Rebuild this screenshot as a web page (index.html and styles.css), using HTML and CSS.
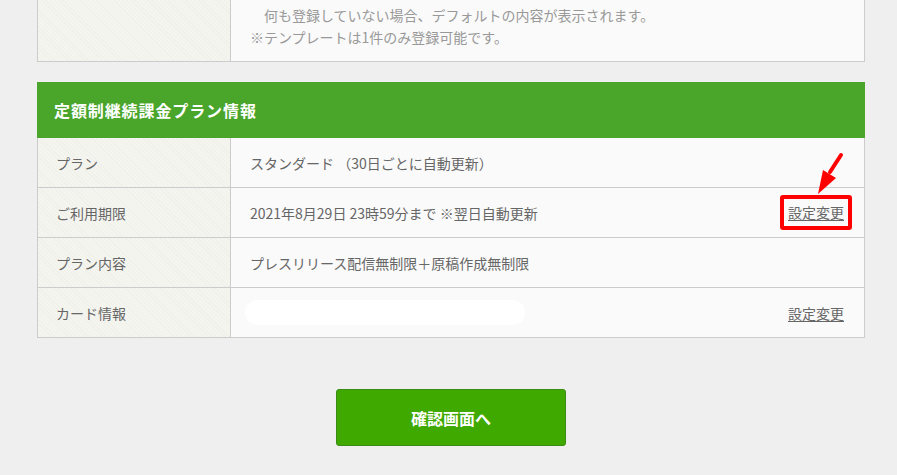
FILE: index.html
```html
<!DOCTYPE html>
<html lang="ja">
<head>
<meta charset="utf-8">
<title>定額制継続課金プラン情報</title>
<link rel="stylesheet" href="styles.css">
</head>
<body>
<div class="page">
  <div class="table top-table">
    <div class="row">
      <div class="label"></div>
      <div class="value notes">
        <p class="note indent">何も登録していない場合、デフォルトの内容が表示されます。</p>
        <p class="note">※テンプレートは1件のみ登録可能です。</p>
      </div>
    </div>
  </div>

  <section class="card">
    <h2 class="card-title">定額制継続課金プラン情報</h2>
    <div class="table">
      <div class="row">
        <div class="label">プラン</div>
        <div class="value">スタンダード （30日ごとに自動更新）</div>
      </div>
      <div class="row">
        <div class="label">ご利用期限</div>
        <div class="value">
          <span>2021年8月29日 23時59分まで ※翌日自動更新</span>
          <span class="highlight"><a class="link" href="#">設定変更</a></span>
        </div>
      </div>
      <div class="row">
        <div class="label">プラン内容</div>
        <div class="value">プレスリリース配信無制限＋原稿作成無制限</div>
      </div>
      <div class="row">
        <div class="label">カード情報</div>
        <div class="value">
          <span class="pill"></span>
          <a class="link" href="#">設定変更</a>
        </div>
      </div>
    </div>
    <svg class="arrow" width="40" height="50" viewBox="0 0 40 50">
      <line x1="31" y1="5" x2="20" y2="22" stroke="#ff0000" stroke-width="4" stroke-linecap="round"/>
      <polygon points="8,44 13,20 26,28" fill="#ff0000"/>
    </svg>
  </section>

  <div class="actions">
    <button class="btn" type="button">確認画面へ</button>
  </div>
</div>
</body>
</html>
```
FILE: styles.css
```css
* { box-sizing: border-box; }
html, body {
  margin: 0;
  padding: 0;
  background: #efefef;
  font-family: "Noto Sans CJK JP", "Noto Sans", sans-serif;
  color: #666;
  font-size: 14px;
}
.page {
  width: 828px;
  margin-left: 37px;
  margin-top: -11px;
}
.table {
  border: 1px solid #cccccc;
  background: #fafafa;
}
.card .table { border-top: 0; }
.row {
  display: grid;
  grid-template-columns: 193px 1fr;
  height: 50px;
  border-bottom: 1px solid #cccccc;
}
.row:last-child { border-bottom: 0; height: 49px; }
.top-table .row { height: auto; }
.label {
  border-right: 1px solid #cccccc;
  background-color: #f5f5f0;
  background-image: repeating-linear-gradient(45deg, rgba(0,0,0,0.018) 0 1px, transparent 1px 3px);
  padding-left: 18px;
  display: flex;
  align-items: center;
  color: #666;
}
.value {
  display: flex;
  align-items: center;
  justify-content: space-between;
  padding: 0 20px 0 19px;
  color: #666;
}
.notes {
  display: block;
  padding: 14px 20px 13px 19px;
}
.note {
  margin: 0;
  line-height: 22px;
  color: #999;
}
.indent { padding-left: 14px; }

.card {
  margin-top: 20px;
  position: relative;
}
.card-title {
  margin: 0;
  height: 56px;
  display: flex;
  align-items: center;
  padding-left: 17px;
  background: #4aa52b;
  color: #fff;
  font-size: 16px;
  letter-spacing: 0.9px;
  font-weight: bold;
}
.link {
  color: #666;
  text-decoration: underline;
  text-underline-offset: 2px;
}
.highlight {
  border: 4px solid #ff0000;
  border-radius: 3px;
  padding: 4px 4px 5px 4px;
  margin: -9px -8px;
  line-height: 18px;
}
.pill {
  display: block;
  width: 280px;
  height: 25px;
  margin-left: -5px;
  border-radius: 13px;
  background: #ffffff;
}
.arrow {
  position: absolute;
  left: 773px;
  top: 68px;
}
.actions {
  display: flex;
  justify-content: center;
  margin-top: 51px;
}
.btn {
  width: 230px;
  height: 57px;
  background: #3fa900;
  border: 1px solid #3a8d12;
  border-radius: 3px;
  color: #fff;
  font-family: "Noto Sans CJK JP", "Noto Sans", sans-serif;
  font-size: 16px;
  font-weight: bold;
}
```
